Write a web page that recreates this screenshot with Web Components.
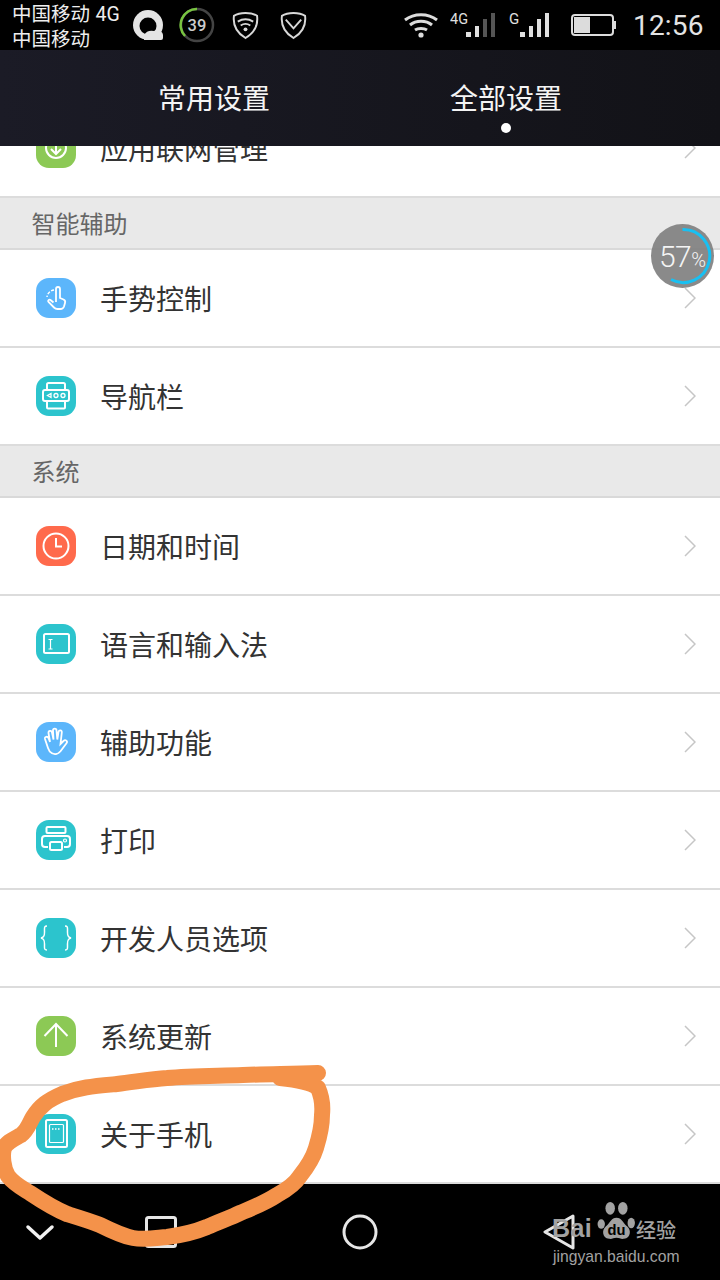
<!DOCTYPE html>
<html>
<head>
<meta charset="utf-8">
<style>
  html, body { margin: 0; padding: 0; background: #000; }
  body { font-family: "Noto Sans CJK SC", "Noto Sans", sans-serif; }
</style>
</head>
<body>
<phone-screen>
  <status-bar slot="status"></status-bar>
  <tab-header slot="header">
    <span slot="first">常用设置</span>
    <span slot="second">全部设置</span>
  </tab-header>
  <setting-row icon="net" color="#8cc955">应用联网管理</setting-row>
  <section-title>智能辅助</section-title>
  <setting-row icon="gesture" color="#5cb6fb">手势控制</setting-row>
  <setting-row icon="navbar" color="#2cc4cd">导航栏</setting-row>
  <section-title>系统</section-title>
  <setting-row icon="clock" color="#ff6a4c">日期和时间</setting-row>
  <setting-row icon="input" color="#2cc4cd">语言和输入法</setting-row>
  <setting-row icon="hand" color="#5cb6fb">辅助功能</setting-row>
  <setting-row icon="print" color="#2cc4cd">打印</setting-row>
  <setting-row icon="dev" color="#2cc4cd">开发人员选项</setting-row>
  <setting-row icon="update" color="#8cc955">系统更新</setting-row>
  <setting-row icon="about" color="#2cc4cd">关于手机</setting-row>
  <nav-bar slot="nav"></nav-bar>
  <speed-badge slot="over" value="57"></speed-badge>
  <ink-circle slot="over"></ink-circle>
  <baidu-mark slot="over"></baidu-mark>
</phone-screen>

<script>
class PhoneScreen extends HTMLElement {
  constructor() {
    super();
    this.attachShadow({ mode: 'open' }).innerHTML = `
      <style>
        :host { display: flex; flex-direction: column; position: relative; width: 720px; height: 1280px; overflow: hidden; background: #fff; }
        .list { flex: 1; min-height: 0; overflow: hidden; }
        .inner { margin-top: -46px; }
      </style>
      <slot name="status"></slot>
      <slot name="header"></slot>
      <div class="list"><div class="inner"><slot></slot></div></div>
      <slot name="nav"></slot>
      <slot name="over"></slot>`;
  }
}

class StatusBar extends HTMLElement {
  constructor() {
    super();
    this.attachShadow({ mode: 'open' }).innerHTML = `
      <style>
        :host { display: flex; align-items: center; height: 50px; background: #000; color: #e6e6e6; flex: none; }
        .carrier { width: 121px; margin-left: 12px; padding-top: 3px; font: 19.5px/24px "Liberation Sans", "Noto Sans CJK SC", sans-serif; white-space: nowrap; color: #eee; }
        .carrier .g { font-family: Roboto, sans-serif; }
        svg { display: block; flex: none; }
        .time { margin-left: 16px; font: 28px Roboto, sans-serif; letter-spacing: .2px; color: #e4e4e4; }
      </style>
      <div class="carrier">中国移动 <span class="g">4G</span><br>中国移动</div>
      <svg width="32" height="32" viewBox="0 0 32 32">
        <circle cx="15" cy="16" r="15" fill="#e4e4e4"/>
        <circle cx="15" cy="17" r="8.500" fill="#000"/>
        <path d="M11 31v-5a9 8 0 0 1 10-4 6 5 0 0 1 9 4v3a2 2 0 0 1-2 2z" fill="#e4e4e4"/>
      </svg>
      <svg style="margin-left:14px" width="36" height="36" viewBox="0 0 36 36">
        <circle cx="18" cy="18" r="16" fill="none" stroke="#444" stroke-width="2.500"/>
        <path d="M18 2A16 16 0 0 0 6 29" fill="none" stroke="#78c440" stroke-width="2.500"/>
        <text x="18" y="24" text-anchor="middle" font-family="Roboto" font-size="16.500" font-weight="500" fill="#ccc">39</text>
      </svg>
      <svg style="margin-left:17px" width="27" height="29" viewBox="0 0 28 30" fill="none" stroke="#d8d8d8" stroke-width="2">
        <path d="M14 2C9 2 5 3 2 5c-1 8 2 17 12 23C24 22 27 13 26 5c-3-2-7-3-12-3z"/>
        <path d="M6 11c5-3 11-3 16 0M9 15c3-2 7-2 10 0"/>
        <circle cx="14" cy="19" r="2" fill="#d8d8d8" stroke="none"/>
      </svg>
      <svg style="margin-left:21px" width="27" height="29" viewBox="0 0 28 30" fill="none" stroke="#d8d8d8" stroke-width="2">
        <path d="M14 2C9 2 5 3 2 5c-1 8 2 17 12 23C24 22 27 13 26 5c-3-2-7-3-12-3z"/>
        <path d="M6 9l8 9 8-9"/>
      </svg>
      <svg style="margin-left:96px" width="36" height="26" viewBox="0 0 36 26" fill="none" stroke="#dcdcdc" stroke-width="3">
        <path d="M2 8c9-7 23-7 32 0M7 13c6-5 16-5 22 0M12 18c3-2 9-2 12 0"/>
        <circle cx="18" cy="23" r="2.600" fill="#dcdcdc" stroke="none"/>
      </svg>
      <svg style="margin-left:11px" width="48" height="28" viewBox="0 0 48 28" fill="#e0e0e0">
        <text x="0" y="13" font-family="Roboto" font-size="15" fill="#e0e0e0" textLength="18" lengthAdjust="spacingAndGlyphs">4G</text>
        <rect x="16" y="21" width="5" height="5"/><rect x="25" y="15" width="4" height="11"/>
        <rect x="33" y="8" width="4" height="18" fill="#555"/><rect x="41" y="2" width="4" height="24" fill="#555"/>
      </svg>
      <svg style="margin-left:10px" width="44" height="28" viewBox="0 0 44 28" fill="#e0e0e0">
        <text x="1" y="13" font-family="Roboto" font-size="15" fill="#e0e0e0">G</text>
        <rect x="12" y="21" width="5" height="5"/><rect x="21" y="15" width="4" height="11"/>
        <rect x="29" y="8" width="4" height="18"/><rect x="37" y="2" width="4" height="24"/>
      </svg>
      <svg style="margin-left:19px" width="46" height="22" viewBox="0 0 46 22">
        <rect x="1" y="1" width="41" height="20" rx="3" fill="none" stroke="#dcdcdc" stroke-width="2"/>
        <rect x="3" y="3" width="16" height="16" fill="#dcdcdc"/>
        <rect x="43" y="7" width="2" height="8" fill="#dcdcdc"/>
      </svg>
      <div class="time">12:56</div>`;
  }
}

class TabHeader extends HTMLElement {
  constructor() {
    super();
    this.attachShadow({ mode: 'open' }).innerHTML = `
      <style>
        :host { display: flex; flex: none; height: 96px; padding-left: 68px; box-sizing: border-box; background: linear-gradient(90deg, #1b1b26, #121217); color: #f4f4f4; font-size: 28px; position: relative; z-index: 1; }
        .tab { width: 292px; display: flex; flex-direction: column; align-items: center; padding-top: 27px; box-sizing: border-box; line-height: 40px; }
        .dot { width: 10px; height: 10px; border-radius: 50%; background: #fff; margin-top: 6px; }
      </style>
      <div class="tab"><slot name="first"></slot></div>
      <div class="tab"><slot name="second"></slot><div class="dot"></div></div>`;
  }
}

class SectionTitle extends HTMLElement {
  constructor() {
    super();
    this.attachShadow({ mode: 'open' }).innerHTML = `
      <style>
        :host { display: flex; align-items: center; height: 52px; box-sizing: border-box; padding: 0 0 2px 31.5px; background: #e9e9e9; border-bottom: 2px solid #d9d9d9; color: #666; font-size: 24px; }
      </style>
      <slot></slot>`;
  }
}

const ICONS = {
  net: '<circle cx="20" cy="20" r="10"/><path d="M20 14v12M15 21l5 5 5-5"/>',
  gesture: '<path d="M20 24V11a2 2 0 0 1 4 0v9l3.500 1.500c1.500.7 2 2 1.500 3.500l-1 3.500c-.5 1.500-2 2.500-3.500 2.500h-3c-1.500 0-2.500-.5-3.500-1.500l-5.500-5.500c-1.200-1.300.7-3 2-2l3 2.500" stroke-width="1.800"/><path d="M18 12a8 8 0 0 0-7 7" stroke-width="1.500" stroke-dasharray="3 1.500"/>',
  navbar: '<rect x="11" y="7" width="18" height="7" rx="1.500"/><rect x="7" y="14" width="26" height="11" rx="2"/><path d="M11 25v6.500a1 1 0 0 0 1 1h16a1 1 0 0 0 1-1V25"/><path d="M15 17.500l-3.500 2 3.500 2z" stroke-width="1.300"/><circle cx="20" cy="19.500" r="2" stroke-width="1.300"/><circle cx="27" cy="19.500" r="2" stroke-width="1.300"/>',
  clock: '<circle cx="20" cy="20" r="12.500"/><path d="M20 12v8.500h6"/>',
  input: '<rect x="8" y="10" width="25" height="19" rx="1.500"/><path d="M12.500 15.500h4M12.500 25h4M14.500 15.500V25" stroke-width="1.200"/>',
  hand: '<path d="M12 26l-3-9c-.5-2.500 2.500-3 3.500-1l1.500 4-1.500-9c-.3-2.500 3-3 3.500-.5l1.500 7-.5-9c0-2.500 3.500-2.500 3.500 0l.8 9 1.200-7.500c.5-2.300 3.500-2 3.300.5L24.500 22l3-3c2-2 4.500.3 3 2.300l-6 8c-2 2.500-5.500 3.500-8.500 2-2-1-3.300-3-4-5.300z" stroke-width="1.800"/>',
  print: '<rect x="10.500" y="7" width="19" height="6" rx="1"/><path d="M12 27H9a3 3 0 0 1-3-3v-5a3 3 0 0 1 3-3h22a3 3 0 0 1 3 3v5a3 3 0 0 1-3 3h-3"/><rect x="14" y="22" width="12" height="8" rx="1.500"/><circle cx="29" cy="20.500" r="1.500" stroke-width="1.200"/>',
  dev: '<path d="M11 8c-3 0-2.500 2-2.500 5s.5 6-3.500 7c4 1 3.500 4 3.500 7s-.5 5 2.500 5M29 8c3 0 2.500 2 2.500 5s-.5 6 3.500 7c-4 1-3.500 4-3.500 7s.5 5-2.500 5" stroke-width="1.500"/>',
  update: '<path d="M20 31V8M8.500 20L20 8l11.500 12"/>',
  about: '<rect x="10" y="6" width="21" height="27" rx="1.500"/><rect x="13.500" y="10.500" width="14" height="18" rx="1" stroke-width="1.200"/><path d="M16 15h1.500M19 15h1.500M22 15h1.500" stroke-width="1.500"/>'
};

class SettingRow extends HTMLElement {
  constructor() {
    super();
    this.attachShadow({ mode: 'open' }).innerHTML = `
      <style>
        :host { display: flex; align-items: center; height: 98px; box-sizing: border-box; background: #fff; border-bottom: 2px solid #dcdcdc; color: #333; font-size: 28px; }
        .icon { width: 40px; height: 40px; margin-left: 36px; border-radius: 13px; flex: none; }
        .icon svg { display: block; }
        .label { margin-left: 24px; flex: 1; line-height: 40px; }
        .more { margin-right: 24px; display: block; }
      </style>
      <div class="icon"><svg width="40" height="40" viewBox="0 0 40 40" fill="none" stroke="#fff" stroke-width="2"></svg></div>
      <div class="label"><slot></slot></div>
      <svg class="more" width="12" height="22" viewBox="0 0 12 22" fill="none" stroke="#c6c6c6" stroke-width="1.500"><path d="M1 1l10 10L1 21"/></svg>`;
  }
  connectedCallback() {
    this.shadowRoot.querySelector('.icon').style.background = this.getAttribute('color');
    this.shadowRoot.querySelector('.icon svg').innerHTML = ICONS[this.getAttribute('icon')];
  }
}

class NavBar extends HTMLElement {
  constructor() {
    super();
    this.attachShadow({ mode: 'open' }).innerHTML = `
      <style>
        :host { display: flex; align-items: center; flex: none; height: 96px; padding: 0 0 0 25px; box-sizing: border-box; background: #000; }
        svg { display: block; flex: none; }
      </style>
      <svg width="30" height="20" viewBox="0 0 30 20" fill="none" stroke="#f2f2f2" stroke-width="3.500" stroke-linecap="round" stroke-linejoin="round"><path d="M3 5l12 11L27 5"/></svg>
      <svg style="margin-left:90px" width="32" height="32" viewBox="0 0 32 32" fill="none" stroke="#e6e6e6" stroke-width="3"><rect x="1.500" y="1.500" width="29" height="29" rx="2"/></svg>
      <svg style="margin-left:165px" width="36" height="36" viewBox="0 0 36 36" fill="none" stroke="#e6e6e6" stroke-width="3"><circle cx="18" cy="18" r="16"/></svg>
      <svg style="margin-left:164px" width="34" height="36" viewBox="0 0 34 36" fill="none" stroke="#e6e6e6" stroke-width="3" stroke-linejoin="round"><path d="M31 2L3 18l28 16z"/></svg>`;
  }
}

class SpeedBadge extends HTMLElement {
  constructor() {
    super();
    this.attachShadow({ mode: 'open' }).innerHTML = `
      <style>
        :host { position: absolute; left: 651px; top: 224px; width: 63px; height: 64px; display: flex; align-items: center; justify-content: center; border-radius: 50%; background: rgba(128,128,128,.92); color: #f4f4f4; font-family: Roboto, sans-serif; font-size: 30px; }
        svg { position: absolute; left: 0; top: 0; }
        small { font-size: 20px; font-weight: 300; margin-top: 7px; }
        .t { font-weight: 300; letter-spacing: -.5px; }
      </style>
      <svg width="63" height="64" viewBox="0 0 63 64" fill="none"><path d="M31.500 5.500A26.500 26.500 0 1 1 20 55.500" stroke="#18c0f2" stroke-width="3"/></svg>
      <span class="t">${this.getAttribute('value')}</span><small>%</small>`;
  }
}

class InkCircle extends HTMLElement {
  constructor() {
    super();
    this.attachShadow({ mode: 'open' }).innerHTML = `
      <style>
        :host { position: absolute; left: 0; top: 1050px; width: 340px; height: 210px; pointer-events: none; }
        svg { display: block; }
      </style>
      <svg width="340" height="210" viewBox="0 1050 340 210" fill="none" stroke="#f4924a" stroke-width="16" stroke-linecap="round" stroke-linejoin="round">
        <path d="M318 1073C290 1074 270 1074 243 1075C215 1076 190 1076 167 1078C150 1079 135 1082 117 1084C95 1086 80 1087 62 1094C48 1100 40 1106 33 1117C29 1124 27 1131 21 1135C12 1140 7 1142 4 1148C2 1155 3 1168 8 1176C14 1184 22 1188 30 1193C42 1201 55 1209 67 1214C80 1218 90 1221 100 1225C112 1231 122 1236 133 1238C145 1240 155 1238 167 1237C182 1235 195 1232 207 1227C220 1221 230 1218 240 1213C252 1208 265 1203 277 1195C288 1189 295 1184 300 1176C308 1166 313 1158 316 1148C320 1135 322 1125 322 1115C323 1105 322 1097 318 1088C312 1083 300 1080 280 1078"/>
      </svg>`;
  }
}

class BaiduMark extends HTMLElement {
  constructor() {
    super();
    this.attachShadow({ mode: 'open' }).innerHTML = `
      <style>
        :host { position: absolute; left: 552px; top: 1202px; width: 130px; height: 64px; color: #a2a2a2; display: block; }
        .row { display: flex; align-items: flex-end; height: 40px; width: 130px; }
        .bai { width: 45px; font: 700 25px/26px "Liberation Sans", sans-serif; letter-spacing: .4px; flex: none; margin-bottom: 1px; }
        svg { display: block; flex: none; }
        .jy { font-size: 20px; line-height: 24px; color: #a2a2a2; font-weight: 500; white-space: nowrap; }
        .url { font: 15.700px/18px "Liberation Sans", sans-serif; margin-top: 6px; margin-left: 1px; white-space: nowrap; letter-spacing: 0; }
      </style>
      <div class="row">
        <span class="bai">Bai</span>
        <svg width="39" height="40" viewBox="0 0 36 38" fill="#a2a2a2">
          <ellipse cx="3.500" cy="21" rx="3.500" ry="4.500"/><ellipse cx="12" cy="6" rx="4.500" ry="6"/><ellipse cx="24" cy="6" rx="4.500" ry="6"/><ellipse cx="32" cy="20" rx="3.500" ry="5"/>
          <path d="M18 15c-5 0-6 5-10 8-4 3-4 11 3 12 3 .5 4-1 7-1s4 1.500 7 1c7-1 7-9 3-12-4-3-5-8-10-8z"/>
          <text x="18" y="31" text-anchor="middle" font-family="Liberation Sans" font-size="14" font-weight="700" fill="#000">du</text>
        </svg>
        <span class="jy">经验</span>
      </div>
      <div class="url">jingyan.baidu.com</div>`;
  }
}

customElements.define('phone-screen', PhoneScreen);
customElements.define('status-bar', StatusBar);
customElements.define('tab-header', TabHeader);
customElements.define('section-title', SectionTitle);
customElements.define('setting-row', SettingRow);
customElements.define('nav-bar', NavBar);
customElements.define('speed-badge', SpeedBadge);
customElements.define('ink-circle', InkCircle);
customElements.define('baidu-mark', BaiduMark);
</script>
</body>
</html>
